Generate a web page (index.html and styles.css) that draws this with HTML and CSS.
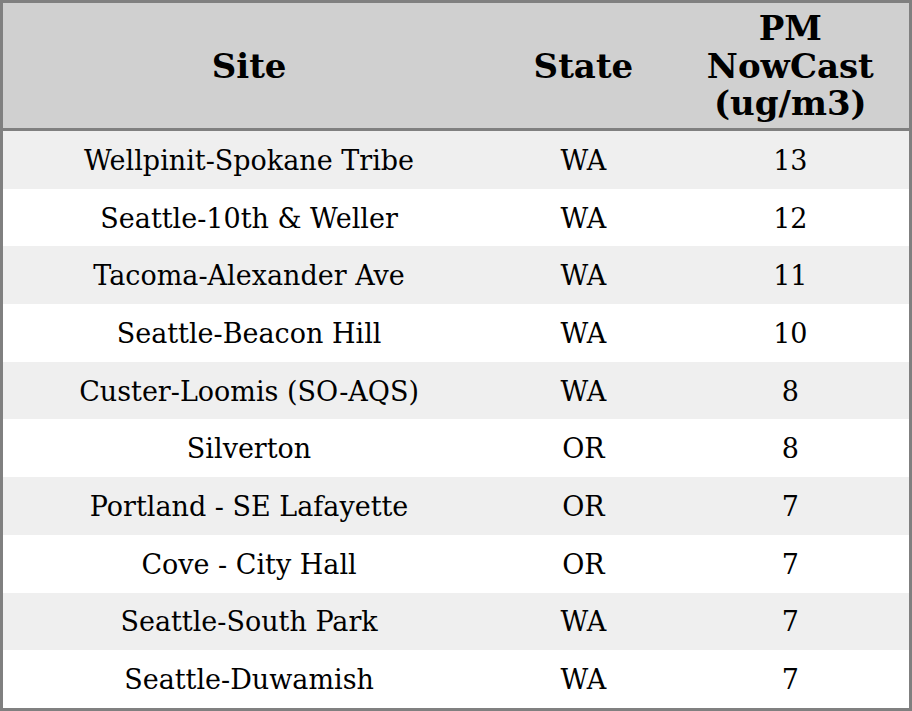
FILE: index.html
```html
<!DOCTYPE html>
<html>
<head>
<meta charset="utf-8">
<link rel="stylesheet" href="styles.css">
</head>
<body>
<table class="aq">
  <colgroup>
    <col class="c-site">
    <col class="c-state">
    <col class="c-pm">
  </colgroup>
  <thead>
    <tr><th>Site</th><th>State</th><th>PM<br>NowCast<br>(ug/m3)</th></tr>
  </thead>
  <tbody>
    <tr><td>Wellpinit-Spokane Tribe</td><td>WA</td><td>13</td></tr>
    <tr><td>Seattle-10th &amp; Weller</td><td>WA</td><td>12</td></tr>
    <tr><td>Tacoma-Alexander Ave</td><td>WA</td><td>11</td></tr>
    <tr><td>Seattle-Beacon Hill</td><td>WA</td><td>10</td></tr>
    <tr><td>Custer-Loomis (SO-AQS)</td><td>WA</td><td>8</td></tr>
    <tr><td>Silverton</td><td>OR</td><td>8</td></tr>
    <tr><td>Portland - SE Lafayette</td><td>OR</td><td>7</td></tr>
    <tr><td>Cove - City Hall</td><td>OR</td><td>7</td></tr>
    <tr><td>Seattle-South Park</td><td>WA</td><td>7</td></tr>
    <tr><td>Seattle-Duwamish</td><td>WA</td><td>7</td></tr>
  </tbody>
</table>
</body>
</html>
```
FILE: styles.css
```css
html, body {
  margin: 0;
  padding: 0;
  background: #ffffff;
}
.aq {
  width: 912px;
  border-collapse: collapse;
  table-layout: fixed;
  border: 3px solid #808080;
  font-family: "DejaVu Serif", serif;
  color: #000;
}
.c-site { width: 492px; }
.c-state { width: 176px; }
.c-pm { width: 238px; }
.aq th {
  background: #d0d0d0;
  font-size: 34px;
  font-weight: bold;
  line-height: 37.5px;
  padding: 7px 0 5.5px;
  text-align: center;
  border-bottom: 3px solid #808080;
}
.aq td {
  font-size: 27px;
  line-height: 31px;
  padding: 13.85px 0 12.85px;
  text-align: center;
}
.aq tbody tr:nth-child(odd) td {
  background: #efefef;
}
```
